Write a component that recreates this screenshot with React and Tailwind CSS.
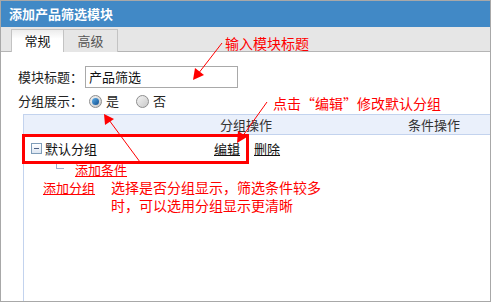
import React from "react";

function Radio({ checked }) {
  return (
    <span className="w-[13px] h-[13px] rounded-full border border-[#8d8d8d] bg-gradient-to-br from-[#f4f4f4] to-[#c9c9c9] flex items-center justify-center">
      {checked && <span className="w-[7px] h-[7px] rounded-full bg-gradient-to-br from-[#5fb0ea] to-[#0d4f8f]" />}
    </span>
  );
}

function Arrows() {
  return (
    <svg className="absolute inset-0 pointer-events-none" width="491" height="302">
      {/* arrow to input */}
      <line x1="221" y1="42" x2="197" y2="73" stroke="#ff0000" strokeWidth="1" />
      <polygon points="192,79 194,67 203,74" fill="#ff0000" />
      {/* arrow to edit */}
      <line x1="266" y1="101" x2="241" y2="136" stroke="#ff0000" strokeWidth="1" />
      <polygon points="236,142 237,130 246,136" fill="#ff0000" />
      {/* arrow to radio */}
      <line x1="139" y1="161" x2="108" y2="119" stroke="#ff0000" strokeWidth="1" />
      <polygon points="103,113 104,124 113,118" fill="#ff0000" />
    </svg>
  );
}

export default function App() {
  return (
    <div className="relative w-[491px] h-[302px] overflow-hidden border border-[#a8a8a8] bg-white font-['Noto_Sans_CJK_SC',sans-serif] text-[13px] text-[#222]">
      {/* Title */}
      <div className="h-[26px] bg-[#4189c6] text-white font-bold text-[13px] flex items-center pl-2">
        添加产品筛选模块
      </div>

      {/* Tabs */}
      <div className="h-[25px] bg-[#e6e6e6] border-b border-[#b5b5b5] flex items-end pl-[10px]">
        <div className="h-[23px] w-[53px] -mb-px bg-gradient-to-b from-[#ececec] to-white to-40% border border-b-0 border-[#c3c3c3] flex items-center justify-center text-[#111]">
          常规
        </div>
        <div className="h-[23px] w-[54px] -mb-px bg-[#e6e6e6] border-r border-t border-[#c3c3c3] flex items-center justify-center text-[#555]">
          高级
        </div>
      </div>

      {/* Form */}
      <div className="pl-[17px] pt-[14px]">
        <div className="flex items-center h-[22px]">
          <span className="w-[67px]">模块标题：</span>
          <div className="w-[153px] h-[22px] border border-[#a9a9a9] flex items-center pl-[3px] text-[#111]">
            产品筛选
          </div>
        </div>
        <div className="flex items-center h-[18px] mt-[4px]">
          <span className="w-[71px]">分组展示：</span>
          <Radio checked />
          <span className="ml-[4px] w-[30px]">是</span>
          <Radio />
          <span className="ml-[4px]">否</span>
        </div>
      </div>

      {/* Table */}
      <div className="ml-[22px] mt-[4px] border-l border-t border-[#c3d3ee] h-[200px]">
        <div className="h-[20px] bg-[#eaf0fb] border-b border-[#c3d3ee] flex items-center text-[#333]">
          <span className="ml-[196px] w-[188px]">分组操作</span>
          <span>条件操作</span>
        </div>
        <div className="h-[27px] flex items-center">
          <span className="ml-[7px] w-[11px] h-[11px] border border-[#7f9db9] bg-gradient-to-b from-white to-[#dde6f2] flex items-center justify-center">
            <span className="w-[5px] h-px bg-[#4d6185]" />
          </span>
          <span className="ml-[3px] w-[169px] text-[#111]">默认分组</span>
          <span className="underline text-[#111]">编辑</span>
          <span className="ml-[14px] underline text-[#111]">删除</span>
        </div>
        <div className="h-[17px] flex items-start">
          <span className="ml-[32px] w-[8px] h-[7px] border-l border-b border-[#9db0cc]" />
          <span className="ml-[11px] -mt-[1px] underline text-[#ff0000] leading-[17px]">添加条件</span>
        </div>
        <div className="flex items-start">
          <span className="ml-[19px] underline text-[#ff0000] leading-[18px]">添加分组</span>
          <div className="ml-[16px] flex flex-col gap-[1px] text-[14px] leading-[17px] text-[#ff0000] bg-white">
            <span>选择是否分组显示，筛选条件较多</span>
            <span>时，可以选用分组显示更清晰</span>
          </div>
        </div>
      </div>

      {/* Callouts */}
      <span className="absolute left-[224px] top-[33px] text-[14px] text-[#ff0000] leading-[18px]">输入模块标题</span>
      <span className="absolute left-[272px] top-[93px] text-[14px] text-[#ff0000] leading-[18px] bg-white">点击“编辑”修改默认分组</span>
      <div className="absolute left-[21px] top-[133px] w-[227px] h-[30px] border-[3px] border-[#ff0000]" />
      <Arrows />
    </div>
  );
}
